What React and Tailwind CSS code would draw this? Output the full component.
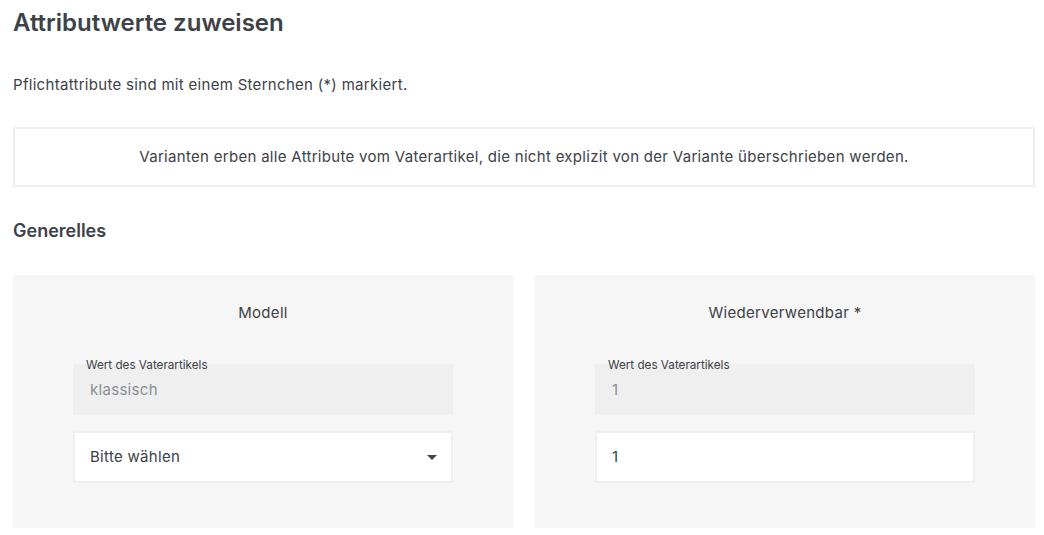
import React from "react";

function ParentValue({ value }) {
  return (
    <div className="relative h-[51px] bg-[#efefef]">
      <span className="absolute left-[13px] top-[-6px] text-[11.7px] leading-[14px] text-[#3d4148]">Wert des Vaterartikels</span>
      <div className="flex h-full items-center pl-[17px] pt-[2px] text-[15px] tracking-[0.3px] text-[#8a8d93]">{value}</div>
    </div>
  );
}

function Card({ title, value, children }) {
  return (
    <div className="flex flex-col bg-[#f6f6f6] px-[60px] pb-[45px] pt-[27px]">
      <div className="mb-[40px] text-center text-[15px] leading-[22px] tracking-[0.3px] text-[#3d4148]">{title}</div>
      <ParentValue value={value} />
      <div className="mt-[16px]">{children}</div>
    </div>
  );
}

export default function App() {
  return (
    <div className="min-h-[535px] bg-white pl-[13px] pt-[8px] text-[#3d4148]" style={{ fontFamily: "Inter, 'Noto Sans', sans-serif" }}>
      <div className="w-[1022px]">
        <h1 className="text-[24px] font-semibold leading-[30px] text-[#3d4148]">Attributwerte zuweisen</h1>
        <p className="mt-[36px] text-[15px] leading-[22px] tracking-[0.3px]">Pflichtattribute sind mit einem Sternchen (*) markiert.</p>
        <div className="mt-[31px] flex h-[60px] items-center justify-center border-2 border-[#efefef] text-[15px] tracking-[0.3px]">
          Varianten erben alle Attribute vom Vaterartikel, die nicht explizit von der Variante überschrieben werden.
        </div>
        <h2 className="mt-[32px] text-[18px] font-semibold leading-[24px]">Generelles</h2>
        <div className="mt-[32px] grid grid-cols-2 gap-[22px]">
          <Card title="Modell" value="klassisch">
            <div className="flex h-[52px] items-center justify-between border-2 border-[#efefef] bg-white pl-[15px] pr-[14px] text-[15px] tracking-[0.3px]">
              <span>Bitte wählen</span>
              <svg width="10" height="5" viewBox="0 0 10 5"><path d="M0 0h10L5 5z" fill="#3d4148" /></svg>
            </div>
          </Card>
          <Card title="Wiederverwendbar *" value="1">
            <div className="flex h-[52px] items-center border-2 border-[#efefef] bg-white pl-[15px] text-[15px]">1</div>
          </Card>
        </div>
      </div>
    </div>
  );
}
